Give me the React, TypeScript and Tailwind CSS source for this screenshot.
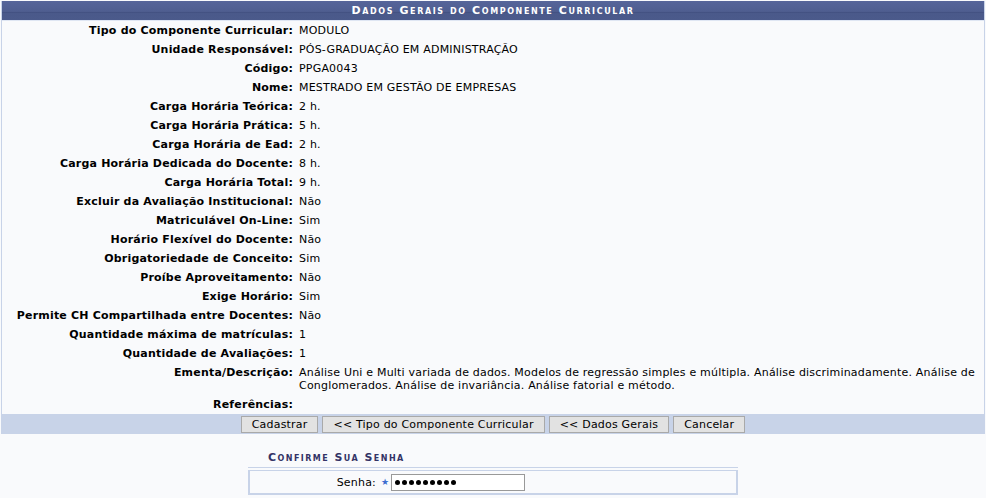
import React from "react";

const rows: [string, string][] = [
  ["Tipo do Componente Curricular:", "MODULO"],
  ["Unidade Responsável:", "PÓS-GRADUAÇÃO EM ADMINISTRAÇÃO"],
  ["Código:", "PPGA0043"],
  ["Nome:", "MESTRADO EM GESTÃO DE EMPRESAS"],
  ["Carga Horária Teórica:", "2 h."],
  ["Carga Horária Prática:", "5 h."],
  ["Carga Horária de Ead:", "2 h."],
  ["Carga Horária Dedicada do Docente:", "8 h."],
  ["Carga Horária Total:", "9 h."],
  ["Excluir da Avaliação Institucional:", "Não"],
  ["Matriculável On-Line:", "Sim"],
  ["Horário Flexível do Docente:", "Não"],
  ["Obrigatoriedade de Conceito:", "Sim"],
  ["Proíbe Aproveitamento:", "Não"],
  ["Exige Horário:", "Sim"],
  ["Permite CH Compartilhada entre Docentes:", "Não"],
  ["Quantidade máxima de matrículas:", "1"],
  ["Quantidade de Avaliações:", "1"],
  [
    "Ementa/Descrição:",
    "Análise Uni e Multi variada de dados. Modelos de regressão simples e múltipla. Análise discriminadamente. Análise de Conglomerados. Análise de invariância. Análise fatorial e método.",
  ],
  ["Referências:", ""],
];

const buttons = [
  "Cadastrar",
  "<< Tipo do Componente Curricular",
  "<< Dados Gerais",
  "Cancelar",
];

export default function App() {
  return (
    <div
      className="w-[986px] h-[498px] bg-[#f9fafc] text-black text-[11px] leading-[13px] tracking-[0.2px] pt-[1px] px-[1px] overflow-hidden"
      style={{ fontFamily: '"DejaVu Sans", Verdana, sans-serif' }}
    >
      <div className="w-[984px] border-l border-r border-[#c8d3e8]">
        <div className="h-[20px] bg-[linear-gradient(#56659a_0%,#4f5e90_55%,#404e7e_58%,#4a598a_65%,#4b5a8b_100%)] flex items-center justify-center border-b border-[#dfe6f3]">
          <span className="text-white font-bold [font-variant:small-caps] tracking-[1.6px] text-[11px]">
            Dados Gerais do Componente Curricular
          </span>
        </div>
        <div className="grid grid-cols-[294px_1fr]">
          {rows.map(([label, value]) => (
            <React.Fragment key={label}>
              <div className="text-right font-bold py-[3px] pr-[3px]">{label}</div>
              <div className="py-[3px] pl-[3px] pr-[8px]">{value}</div>
            </React.Fragment>
          ))}
        </div>
        <div className="h-[20px] bg-[#c8d3e8] flex items-center justify-center gap-[4px]">
          {buttons.map((b) => (
            <button
              key={b}
              className="h-[17px] px-[10px] bg-[#e2e2e2] border border-[#a9a9a9] text-[11px] leading-[13px] tracking-[0.2px] text-black"
              style={{ fontFamily: '"DejaVu Sans", Verdana, sans-serif' }}
            >
              {b}
            </button>
          ))}
        </div>
      </div>

      <div className="w-[490px] mx-auto mt-[17px]">
        <div className="pl-[20px] pb-[3px] border-b border-[#c8d3e8] font-bold text-[#333366] [font-variant:small-caps] tracking-[1.45px]">
          Confirme Sua Senha
        </div>
        <div className="mt-[2px] h-[25px] border-2 border-t border-[#c8d3e8] flex items-center">
          <div className="w-[126px] text-right">Senha:</div>
          <span className="ml-[5px] mr-[2px] text-[#3d6dd0] text-[9px]">★</span>
          <div className="w-[134px] h-[17px] border border-[#999] bg-white flex items-center pl-[3px] gap-[2px]">
            {Array.from({ length: 9 }).map((_, i) => (
              <span key={i} className="w-[5px] h-[5px] rounded-full bg-black" />
            ))}
          </div>
        </div>
      </div>
    </div>
  );
}
